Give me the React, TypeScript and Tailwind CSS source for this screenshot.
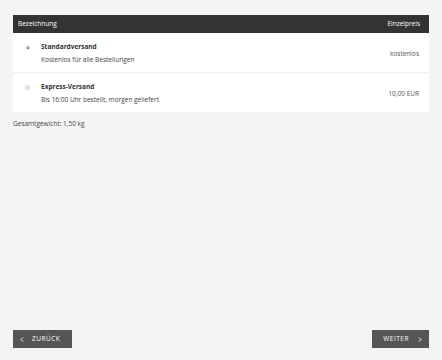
import React from "react";

const rows = [
  { title: "Standardversand", desc: "Kostenlos für alle Bestellungen", price: "kostenlos", selected: true },
  { title: "Express-Versand", desc: "Bis 16:00 Uhr bestellt, morgen geliefert", price: "10,00 EUR", selected: false },
];

export default function App() {
  return (
    <div
      className="w-[442px] h-[360px] bg-[#f4f4f4] flex flex-col px-[13px] pt-[15px] pb-[12px] text-[#333]"
      style={{ fontFamily: '"Open Sans", sans-serif' }}
    >
      <div className="bg-white">
        <div className="h-[18px] bg-[#333] text-white text-[6.5px] flex items-center justify-between pl-[5px] pr-[9px]">
          <span>Bezeichnung</span>
          <span>Einzelpreis</span>
        </div>
        {rows.map((r, i) => (
          <div
            key={r.title}
            className={`flex items-center pr-[10px] ${i === 0 ? "h-[40px] border-b border-[#efefef]" : "h-[39px]"}`}
          >
            <div className="w-[28px] self-stretch pt-[12px] flex justify-center pl-[1px]">
              <span className="w-[5px] h-[5px] rounded-full bg-[#e2e2e2] flex items-center justify-center">
                {r.selected && <span className="w-[2px] h-[2px] rounded-full bg-[#666]" />}
              </span>
            </div>
            <div className="flex-1 flex flex-col gap-[4px] pt-[1px]">
              <span className="text-[6.5px] font-bold leading-[9px] text-[#333]">{r.title}</span>
              <span className="text-[6.5px] leading-[9px] text-[#444]">{r.desc}</span>
            </div>
            <span className="text-[6.5px] text-[#555] pt-[2px]">{r.price}</span>
          </div>
        ))}
      </div>
      <div className="text-[6.5px] text-[#444] mt-[7px]">Gesamtgewicht: 1,50 kg</div>
      <div className="flex-1" />
      <div className="flex justify-between">
        <button className="h-[18px] w-[59px] bg-[#555] text-white text-[6.5px] tracking-[0.5px] flex items-center pl-[7px] gap-[8px] uppercase">
          <svg width="4" height="5" viewBox="0 0 4 5"><path d="M3 0.5L1 2.5L3 4.5" stroke="white" strokeWidth="1" fill="none" /></svg>
          <span>Zurück</span>
        </button>
        <button className="h-[18px] w-[57px] bg-[#555] text-white text-[6.5px] tracking-[0.5px] flex items-center justify-end pr-[7px] gap-[9px] uppercase">
          <span>Weiter</span>
          <svg width="4" height="5" viewBox="0 0 4 5"><path d="M1 0.5L3 2.5L1 4.5" stroke="white" strokeWidth="1" fill="none" /></svg>
        </button>
      </div>
    </div>
  );
}
